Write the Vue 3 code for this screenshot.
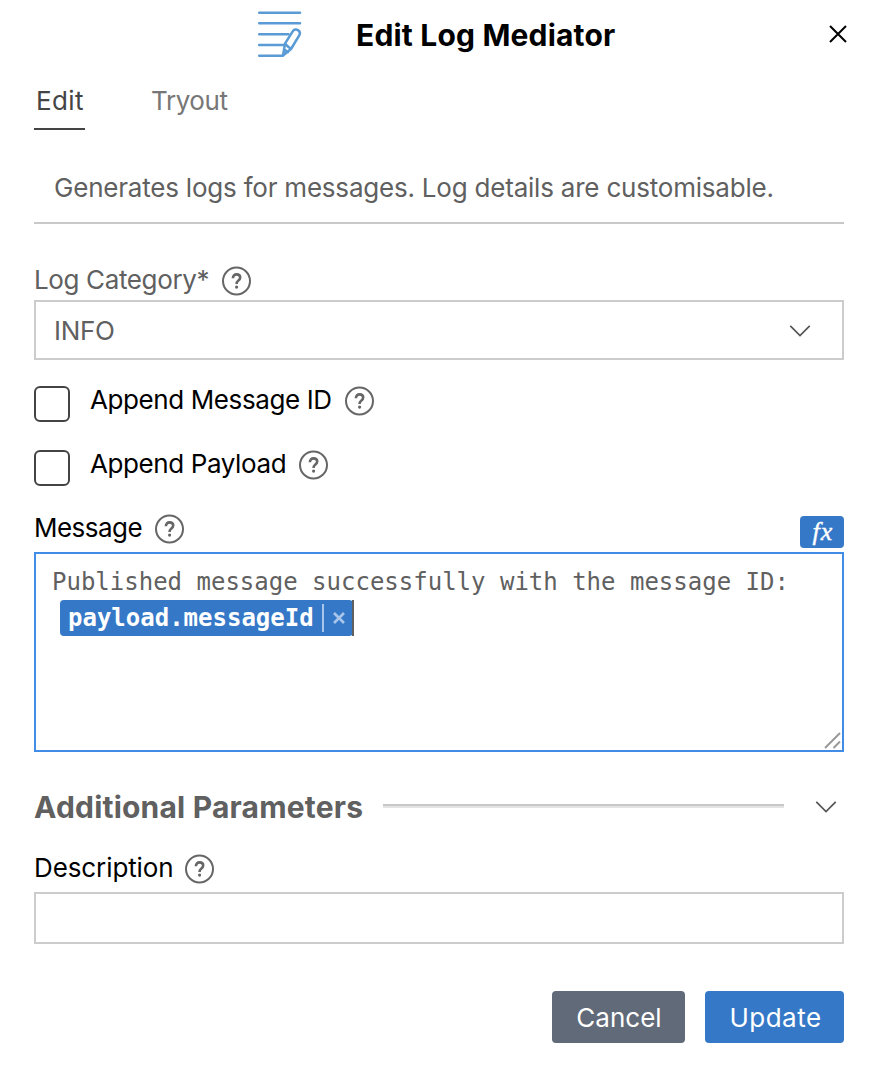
<script setup>
import { ref, h } from 'vue'

const appendId = ref(false)
const appendPayload = ref(false)
const description = ref('')

const HelpIcon = () =>
  h('svg', { width: 30, height: 30, viewBox: '0 0 30 30', fill: 'none', stroke: '#666', 'stroke-width': 2 }, [
    h('circle', { cx: 14.5, cy: 15, r: 13.5 }),
    h('path', { d: 'M10.900 12.300c0-2.500 1.500-3.900 3.700-3.900 2.100 0 3.600 1.300 3.600 3.200 0 1.500-.9 2.300-2 3.100-1.100.8-1.600 1.400-1.600 2.900v.4', 'stroke-width': 2.6 }),
    h('circle', { cx: 14.6, cy: 21.1, r: 1.6, fill: '#666', stroke: 'none' }),
  ])
</script>

<template>
  <main class="panel">
    <header class="head">
      <svg class="logo" width="46" height="50" viewBox="0 0 46 50" fill="none" stroke="#5a9bd5" stroke-width="2.5" stroke-linecap="round" stroke-linejoin="round">
        <path d="M3.200 3.700H44M3.200 14.300H44M3.200 25.200H32.500M3.200 36H28M3.200 46.700H26.500" />
        <path d="M29 34.600L36.700 22.400c1.300-2 3.600-2.400 5.300-1.300 1.900 1.200 2.300 3.500 1.100 5.500L35 40L27 46.500L29 34.600C31 37 33 38.500 35 40M28.200 40.600l3.800 2.500" />
      </svg>
      <h1 class="title">Edit Log Mediator</h1>
      <button class="close" aria-label="Close">
        <svg width="18" height="18" viewBox="0 0 18 18" fill="none" stroke="#000" stroke-width="2"><path d="M1 1L17 17M17 1L1 17" /></svg>
      </button>
    </header>

    <nav class="tabs">
      <a class="tab active"><span class="t-edit">Edit</span></a>
      <a class="tab"><span class="t-try">Tryout</span></a>
    </nav>

    <p class="intro">Generates logs for messages. Log details are customisable.</p>

    <div class="label muted category"><span class="t-cat">Log Category*</span><HelpIcon /></div>
    <div class="select">
      <span class="value">INFO</span>
      <svg width="22" height="12" viewBox="0 0 22 12" fill="none" stroke="#555" stroke-width="1.7"><path d="M1.300.9L11 10.500L20.700.9" /></svg>
    </div>

    <div class="check first">
      <input id="append-id" v-model="appendId" type="checkbox" class="box" />
      <label class="label" for="append-id"><span class="t-id">Append Message ID</span><HelpIcon /></label>
    </div>
    <div class="check">
      <input id="append-payload" v-model="appendPayload" type="checkbox" class="box" />
      <label class="label" for="append-payload"><span class="t-pay">Append Payload</span><HelpIcon /></label>
    </div>

    <div class="message-head">
      <div class="label"><span class="t-msg">Message</span><HelpIcon /></div>
      <button class="fx">fx</button>
    </div>
    <div class="editor">
      <div class="line">Published message successfully with the message ID:</div>
      <div class="line second">
        <span class="chip"><b>payload.messageId</b><i class="sep"></i><svg width="12" height="12" viewBox="0 0 12 12" fill="none" stroke="#a8c5ea" stroke-width="2.700"><path d="M1 1L11 11M11 1L1 11" /></svg></span><i class="caret"></i>
      </div>
      <svg class="grip" width="17" height="17" viewBox="0 0 17 17" fill="none" stroke="#999" stroke-width="2"><path d="M1 16L16 1M9.500 16L16 9.500" /></svg>
    </div>

    <div class="section">
      <h2>Additional Parameters</h2>
      <span class="rule"></span>
      <svg width="22" height="12" viewBox="0 0 22 12" fill="none" stroke="#555" stroke-width="1.700"><path d="M1.300.9L11 10.500L20.700.9" /></svg>
    </div>

    <div class="label desc"><span class="t-desc">Description</span><HelpIcon /></div>
    <input v-model="description" class="field" aria-label="Description" />

    <footer class="actions">
      <button class="btn cancel">Cancel</button>
      <button class="btn update">Update</button>
    </footer>
  </main>
</template>

<style>
body { background: #fff; }
</style>

<style scoped>
* { box-sizing: border-box; }
.panel { height: 1080px; padding: 0 34px; font: 26px/30px Inter, sans-serif; color: #000; background: #fff; overflow: hidden; }
svg { display: block; flex: none; }
button { border: 0; padding: 0; font: inherit; }
.head { height: 70px; display: flex; align-items: center; padding: 0 0 2px 222px; }
.logo { margin-right: 54px; }
.title { margin: 2px 0 0 0; font-size: 30px; line-height: 36px; font-weight: 700; letter-spacing: .178px; white-space: nowrap; }
.close { margin-left: auto; margin-right: -3px; background: none; }
.tabs { display: flex; gap: 66px; height: 60px; padding-top: 16px; }
.tab { height: 44px; color: #777; }
.tab.active { width: 51px; padding-left: 2px; color: #444; border-bottom: 2px solid #444; }
.intro { margin: 0; height: 94px; padding: 43px 0 0 20px; border-bottom: 2px solid #c8c8c8; color: #606060; letter-spacing: -.21px; white-space: nowrap; }
.label { display: flex; align-items: center; gap: 12px; height: 30px; white-space: nowrap; }
.label svg { position: relative; top: 1px; }
.muted { color: #606060; }
.category { margin-top: 41px; }
.select { margin-top: 5px; height: 60px; border: 2px solid #ccc; padding: 2px 31px 0 18px; display: flex; align-items: center; justify-content: space-between; color: #606060; }
.value { letter-spacing: -.3px; }
.check { height: 64px; display: flex; align-items: flex-start; gap: 20px; }
.check.first { margin-top: 26px; }
.check .label { margin-top: -1px; }
.box { appearance: none; margin: 0; width: 36px; height: 36px; border: 2px solid #444; border-radius: 6px; background: #fff; }
.message-head { display: flex; justify-content: space-between; align-items: flex-start; height: 38px; }
.message-head .label { margin-top: -1px; }
.fx { margin-top: 2px; width: 44px; height: 32px; border-radius: 4px; background: #3578c7; color: #fff; font: italic 26px/30px "Liberation Serif", serif; letter-spacing: 1px; padding-left: 2px; -webkit-text-stroke: .4px #fff; }
.editor { position: relative; height: 200px; border: 2px solid #418ce6; padding: 10px 16px; font: 24px/36px "DejaVu Sans Mono", monospace; color: #606060; }
.line { height: 36px; display: flex; white-space: nowrap; }
.second { padding-left: 8px; }
.chip { display: flex; align-items: center; width: 293px; height: 36px; padding-left: 8px; border-radius: 4px; background: #3578c7; color: #fff; }
.sep { width: 2px; height: 28px; margin: 0 9px 0 8px; background: #a8c5ea; }
.caret { width: 2px; height: 36px; margin-left: -1px; background: #606060; }
.grip { position: absolute; right: 1px; bottom: 1px; }
.section { display: flex; align-items: center; height: 30px; margin-top: 40px; color: #606060; }
.section h2 { margin: 0; width: 349px; font-size: 30px; line-height: 30px; font-weight: 700; letter-spacing: .2px; white-space: nowrap; }
.section svg { margin: 0 7px 0 31px; }
.rule { flex: 1; height: 4px; margin-top: -2px; border-top: 2px solid #c8c8c8; background: #e4e4e4; }
.desc { margin-top: 31px; }
.field { display: block; width: 100%; height: 52px; margin-top: 9px; border: 2px solid #ccc; padding: 0 18px; outline: 0; font: inherit; }
.actions { display: flex; justify-content: flex-end; gap: 20px; margin-top: 47px; }
.btn { height: 52px; border-radius: 4px; color: #fff; padding: 1px 0 0 1px; }
.cancel { width: 133px; background: #616a79; }
.update { width: 139px; padding-left: 2px; background: #3578c7; letter-spacing: .5px; }
.t-edit { letter-spacing: .385px; }
.t-try { letter-spacing: -.415px; }
.t-cat { width: 176px; letter-spacing: -.366px; }
.t-id { width: 243px; letter-spacing: -.4px; }
.t-pay { width: 197px; letter-spacing: -.4px; }
.t-msg { width: 109px; letter-spacing: -.523px; }
.t-desc { width: 139px; letter-spacing: -.1px; }
</style>
